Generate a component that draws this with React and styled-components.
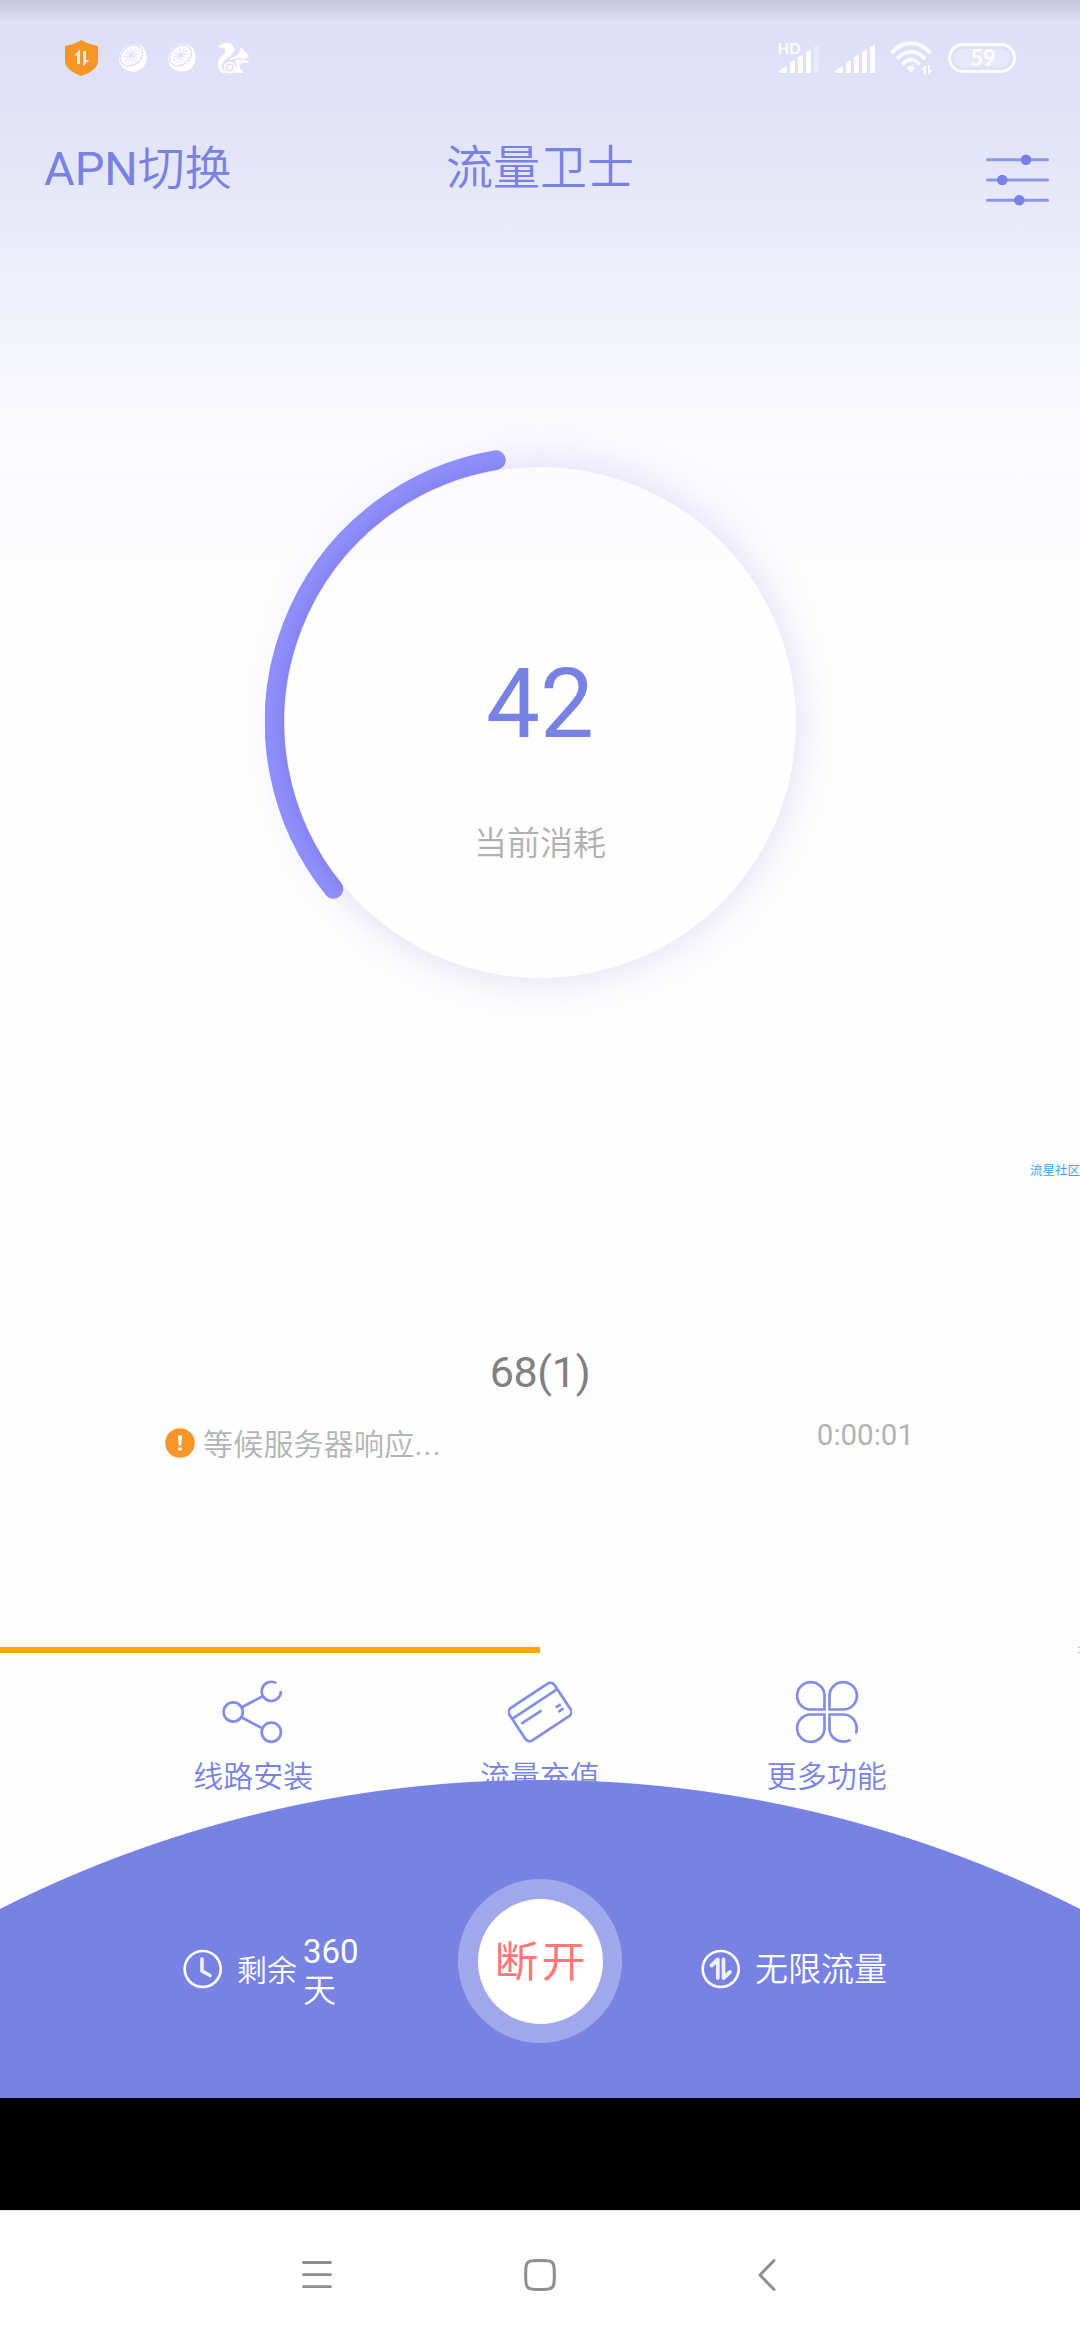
import styled, { createGlobalStyle } from "styled-components";

const App = () => {
  return (
    <Screen>
      <GlobalStyle />
      <StatusBar>
        <StatusIcons>
          <ShieldIcon />
          <LemonIcon />
          <LemonIcon />
          <SquirrelIcon />
        </StatusIcons>
        <SystemIcons>
          <SignalHdIcon />
          <SignalIcon />
          <WifiIcon />
          <Battery>
            <BatteryLevel>59</BatteryLevel>
          </Battery>
        </SystemIcons>
      </StatusBar>

      <Header>
        <ApnLink>
          APN<Thin>切换</Thin>
        </ApnLink>
        <Title>流量卫士</Title>
        <SettingsButton>
          <SlidersIcon />
        </SettingsButton>
      </Header>

      <Gauge>
        <GaugeDisk>
          <GaugeValue>42</GaugeValue>
          <GaugeLabel>当前消耗</GaugeLabel>
        </GaugeDisk>
        <GaugeArc />
      </Gauge>

      <Community>流星社区</Community>

      <Connection>
        <LineName>68(1)</LineName>
        <ConnectionRow>
          <AlertIcon />
          <ConnectionText>
            等候服务器响应<Dots>...</Dots>
          </ConnectionText>
          <Duration>0:00:01</Duration>
        </ConnectionRow>
      </Connection>

      <ProgressTrack>
        <ProgressBar />
        <ProgressEnd />
      </ProgressTrack>

      <Actions>
        {actions.map(({ label, Icon }) => (
          <Action key={label}>
            <Icon />
            <ActionLabel>{label}</ActionLabel>
          </Action>
        ))}
      </Actions>

      <Dome>
        <Remaining>
          <ClockIcon />
          <RemainingLabel>剩余</RemainingLabel>
          <RemainingDays>
            360<Thin>天</Thin>
          </RemainingDays>
        </Remaining>
        <DisconnectButton>
          <DisconnectInner>
            <DisconnectLabel>断开</DisconnectLabel>
          </DisconnectInner>
        </DisconnectButton>
        <Quota>
          <TrafficIcon />
          <QuotaLabel>无限流量</QuotaLabel>
        </Quota>
      </Dome>

      <BlackStrip />

      <NavBar>
        <MenuIcon />
        <HomeIcon />
        <BackIcon />
      </NavBar>
    </Screen>
  );
};

export default App;

/* Icons */

const ShieldIcon = () => (
  <svg width="33" height="36" viewBox="0 0 33 36">
    <path
      d="M16.5 0C21 3 27 5 33 6V21C33 28 25 33 16.5 36C8 33 0 28 0 21V6C6 5 12 3 16.5 0Z"
      fill="#f79628"
    />
    <path d="M15 9.500V24H12V15.500H9ZM18 11H21V20H24.500L18 26Z" fill="#e6e4f2" />
  </svg>
);

const LemonIcon = () => (
  <svg width="28" height="28" viewBox="0 0 28 28">
    <path
      d="M4 5C10 -1 19 -1 24 3C28 8 29 17 25 22C20 29 10 29 4 24C-1 20 -1 11 4 5Z"
      fill="#fff"
    />
    <g transform="rotate(-38 12.500 11.500)" stroke="#dfe0f8" fill="none">
      <ellipse cx="12.500" cy="11.500" rx="12" ry="9.300" strokeWidth="1.400" />
      <path
        d="M3 11.500H22M12.500 4.500V18.500M5 8L20 15M20 8L5 15M8.500 5L16.500 18M16.500 5L8.500 18"
        strokeWidth="0.900"
      />
    </g>
  </svg>
);

const SquirrelIcon = () => (
  <svg width="32" height="32" viewBox="0 0 32 32" fill="#fff">
    <path d="M1 5.500C4 0 13-1 16.500 4C19 8.500 16 12 12.500 14.500C8 18 5 20 5 25C5 28 7 30.500 10 31H6C2 29 0 25 1 20C2 14 9 13 8.500 8.500C8 5.500 4.500 4.500 1 5.500Z" />
    <path d="M13 16C17 15 20 14 22 11L24 5L27 9C29 10 31 12 31.500 14.500C30 17 27 17 25 16.500C21 15.500 17 16 13 18.500Z" />
    <path d="M17 18.500C21 17 26 17.500 31.500 18.500V21H25C23 22 22 24 23 27L26 29V31H16C20 29 21.500 23 17 18.500Z" />
    <circle cx="12.700" cy="25.500" r="5.100" fill="none" stroke="#fff" strokeWidth="2" />
    <circle cx="12.700" cy="25.500" r="2.400" />
  </svg>
);

const SignalHdIcon = () => (
  <SignalSvg width="42" height="32" viewBox="0 0 42 32" fill="#fcfcff">
    <HdText x="-0.5" y="12">
      HD
    </HdText>
    <path d="M1 28.500L9 24V31H1ZM12 20.500L17 18V31H12ZM20 15L25 13V31H20ZM28 10L33 7.500V31H28Z" />
    <path d="M36 5L41 2.500V31H36Z" opacity="0.350" />
  </SignalSvg>
);

const SignalIcon = () => (
  <svg width="40" height="32" viewBox="0 0 40 32" fill="#fcfcff">
    <path d="M0 28.500L8 24V31H0ZM11 20.500L16 18V31H11ZM19 15L24 13V31H19ZM27 10L32 7.500V31H27ZM35 5L40 2V31H35Z" />
  </svg>
);

const WifiIcon = () => (
  <svg width="43" height="34" viewBox="0 0 43 34">
    <g fill="none" stroke="#fcfcff" strokeWidth="3.800">
      <path d="M1.500 12C13-1 29-1 40.500 12" />
      <path d="M7 18C15 8.500 27 8.500 35 18" />
      <path d="M12.500 23.500C18 17 24 17 29.500 23.500" />
    </g>
    <path d="M16.500 27C19 24 23 24 25.500 27L21 31.500Z" fill="#fcfcff" />
    <path
      d="M36 24V33.500H33.800V28.500H31ZM38 33.500V24H40V29H42.500Z"
      fill="#fcfcff"
    />
  </svg>
);

const SlidersIcon = () => (
  <svg width="63" height="52" viewBox="0 0 63 52">
    <path
      d="M1.500 5.700H61.500M1.500 26H61.500M1.500 46.200H61.500"
      stroke="#8c96ea"
      strokeWidth="3"
      strokeLinecap="round"
    />
    <g fill="#7782e2">
      <circle cx="40" cy="5.700" r="5.300" />
      <circle cx="16.300" cy="26" r="5.300" />
      <circle cx="33.300" cy="46.200" r="5.300" />
    </g>
  </svg>
);

const GaugeArc = () => (
  <ArcSvg width="550" height="550" viewBox="0 0 550 550">
    <defs>
      <radialGradient id="arc" gradientUnits="userSpaceOnUse" cx="275" cy="275" r="275.500">
        <stop offset="0.925" stopColor="#8583f3" />
        <stop offset="0.980" stopColor="#8f8ffc" />
      </radialGradient>
    </defs>
    <path
      d="M68.500 442A265.600 265.600 0 0 1 231 13.100"
      fill="none"
      stroke="url(#arc)"
      strokeWidth="19.500"
      strokeLinecap="round"
    />
  </ArcSvg>
);

const AlertIcon = () => (
  <svg width="30" height="30" viewBox="0 0 30 30">
    <circle cx="15" cy="15" r="14.800" fill="#f79628" />
    <path d="M13 7.500H17L16.300 17.500H13.700ZM13.300 19.500H16.700V22.500H13.300Z" fill="#fff" />
  </svg>
);

const ShareIcon = () => (
  <svg width="64" height="64" viewBox="0 0 64 64" fill="none" stroke="#828de7" strokeWidth="2.700">
    <circle cx="12.200" cy="32" r="9.600" />
    <circle cx="50.300" cy="52.200" r="9.600" />
    <path d="M55.300 3.200A9.600 9.600 0 1 0 59.900 11" />
    <path d="M20.800 27.200L41.200 16.500M20.800 37.500L41.700 48.500" />
  </svg>
);

const CardIcon = () => (
  <svg width="64" height="64" viewBox="0 0 64 64" fill="none" stroke="#828de7" strokeWidth="2.700">
    <g transform="rotate(-33.500 32 32)">
      <rect x="5" y="12.500" width="54" height="39" rx="5" />
      <path d="M5 22.500H59" />
      <path d="M11 31.500H33" strokeLinecap="round" />
      <path d="M47.500 37H53.500M47.500 42H53.500" />
    </g>
  </svg>
);

const CloverIcon = () => (
  <svg width="64" height="64" viewBox="0 0 64 64" fill="none" stroke="#828de7" strokeWidth="2.700">
    <path d="M29.500 29.500H15.500A13.700 13.700 0 1 1 29.500 15.500Z" />
    <path d="M34.500 29.500V15.500A13.700 13.700 0 1 1 48.500 29.500Z" />
    <path d="M29.500 34.500V48.500A13.700 13.700 0 1 1 15.500 34.500Z" />
    <path d="M61 53.500C64 43 57 34.500 48.500 34.500H34.500V48.500C34.500 57.500 44 65 55.500 60" />
  </svg>
);

const ClockIcon = () => (
  <svg width="40" height="40" viewBox="0 0 40 40" fill="none" stroke="#fff">
    <circle cx="19.700" cy="20" r="18" strokeWidth="2.600" />
    <path
      d="M19 10V22L27 26.500"
      strokeWidth="3.600"
      strokeLinecap="round"
      strokeLinejoin="round"
      opacity="0.880"
    />
  </svg>
);

const TrafficIcon = () => (
  <svg width="40" height="40" viewBox="0 0 40 40" fill="none" stroke="#fff">
    <circle cx="19.700" cy="20" r="18" strokeWidth="2.600" />
    <path
      d="M10.500 16.500L16.800 10.500V29M22.500 10.500V29L29 23"
      strokeWidth="3.800"
      strokeLinecap="round"
      strokeLinejoin="round"
      opacity="0.880"
    />
  </svg>
);

const MenuIcon = () => (
  <svg width="30" height="32" viewBox="0 0 30 32">
    <path
      d="M1.500 3.500H28.500M1.500 15.700H28.500M1.500 27.700H28.500"
      stroke="#8f8f8f"
      strokeWidth="2.800"
      strokeLinecap="round"
    />
  </svg>
);

const HomeIcon = () => (
  <svg width="32" height="32" viewBox="0 0 32 32">
    <path
      d="M9 1.800Q16 1.200 23 1.800Q29.500 2 30 8Q30.700 16 30 24Q29.500 30 23 30.200Q16 30.800 9 30.200Q2.500 30 2 24Q1.300 16 2 8Q2.500 2 9 1.800Z"
      fill="none"
      stroke="#8f8f8f"
      strokeWidth="3"
    />
  </svg>
);

const BackIcon = () => (
  <svg width="20" height="32" viewBox="0 0 20 32">
    <path
      d="M16 1.500L2 16L16 30.500"
      fill="none"
      stroke="#8f8f8f"
      strokeWidth="3"
      strokeLinecap="round"
      strokeLinejoin="round"
    />
  </svg>
);

const actions = [
  { label: "线路安装", Icon: ShareIcon },
  { label: "流量充值", Icon: CardIcon },
  { label: "更多功能", Icon: CloverIcon },
];

/* Styles */

const GlobalStyle = createGlobalStyle`
  * {
    box-sizing: border-box;
  }
  body {
    margin: 0;
    background: #fefefe;
    font-family: Roboto, "Noto Sans CJK SC", sans-serif;
  }
  svg {
    display: block;
    flex: none;
  }
`;

const Screen = styled.div`
  display: flex;
  flex-direction: column;
  width: 1080px;
  height: 2340px;
  overflow: hidden;
  background:
    linear-gradient(rgba(90, 90, 110, 0.18), rgba(90, 90, 110, 0) 22px),
    linear-gradient(
      #dedff8 0,
      #e1e2f7 110px,
      #e9ebf9 230px,
      #f4f4fc 340px,
      #fafaff 440px,
      #fefefe 620px
    );
`;

/* Chinese glyphs next to Roboto, a step lighter than regular */
const Thin = styled.span`
  font-weight: 350;
`;

const StatusBar = styled.div`
  display: flex;
  justify-content: space-between;
  align-items: center;
  height: 116px;
  padding: 0 64px 0 65px;
`;

const StatusIcons = styled.div`
  display: flex;
  align-items: center;
  gap: 21px;
`;

const SystemIcons = styled.div`
  display: flex;
  align-items: center;
  gap: 15px;
`;

const SignalSvg = styled.svg`
  overflow: visible;
`;

const HdText = styled.text`
  font: 700 15px Lato, sans-serif;
  letter-spacing: 0.3px;
`;

const Battery = styled.div`
  width: 68px;
  height: 30px;
  padding: 3px;
  border: 3px solid #fcfcff;
  border-radius: 15px;
`;

const BatteryLevel = styled.div`
  height: 18px;
  width: 56px;
  padding-left: 2px;
  border-radius: 9px;
  background: rgba(255, 255, 255, 0.25);
  color: #fcfcff;
  font: 900 22px/18px Lato, sans-serif;
  text-align: center;
`;

const Header = styled.div`
  display: grid;
  grid-template-columns: 1fr auto 1fr;
  height: 104px;
  color: #7782e2;
  font-size: 47px;
  line-height: 104px;
`;

const ApnLink = styled.div`
  padding: 1px 0 0 44px;
`;

const Title = styled.div`
  font-weight: 350;
`;

const SettingsButton = styled.div`
  justify-self: end;
  padding: 38px 31px 0 0;
`;

const Gauge = styled.div`
  position: relative;
  width: 550px;
  height: 550px;
  margin: 227px auto 0;
  padding: 19.5px;
`;

const GaugeDisk = styled.div`
  width: 511px;
  height: 511px;
  padding-top: 181px;
  border-radius: 50%;
  box-shadow: 0 0 46px rgba(120, 100, 210, 0.23);
  text-align: center;
`;

/* lies over the rim of the disk */
const ArcSvg = styled.svg`
  position: absolute;
  top: 0;
  left: 0;
`;

const GaugeValue = styled.div`
  color: #7782e2;
  font-size: 96px;
  line-height: 112px;
`;

const GaugeLabel = styled.div`
  margin-top: 64px;
  color: #b0b0b0;
  font-size: 33px;
  font-weight: 350;
  line-height: 40px;
`;

const Community = styled.div`
  margin-top: 162px;
  color: #3ba3f8;
  font-size: 12.5px;
  line-height: 24px;
  text-align: right;
`;

const Connection = styled.div`
  height: 464px;
  padding: 163px 165px 0;
`;

const LineName = styled.div`
  color: #808080;
  font-size: 43px;
  letter-spacing: -0.3px;
  line-height: 52px;
  text-align: center;
`;

const ConnectionRow = styled.div`
  display: flex;
  align-items: flex-start;
  padding-top: 30px;
  color: #b0b5b3;
  font-size: 30px;
  line-height: 36px;
`;

const ConnectionText = styled.div`
  margin: -1px 0 0 8px;
  font-weight: 350;
  letter-spacing: 0.2px;
`;

const Dots = styled.span`
  font-weight: 400;
  letter-spacing: 1.3px;
`;

const Duration = styled.div`
  margin: -11px 1px 0 auto;
  font-size: 29.5px;
`;

const ProgressTrack = styled.div`
  display: flex;
  justify-content: space-between;
  height: 6px;
`;

const ProgressBar = styled.div`
  width: 50%;
  background: #fea50f;
`;

const ProgressEnd = styled.div`
  width: 2px;
  border: solid #f9b95a;
  border-width: 1px 0;
`;

const Actions = styled.div`
  display: grid;
  grid-template-columns: repeat(3, 1fr);
  height: 127px;
  padding: 27px 110px 0;
`;

const Action = styled.div`
  display: flex;
  flex-direction: column;
  align-items: center;
`;

const ActionLabel = styled.div`
  margin-top: 14px;
  color: #7782e2;
  font-size: 30px;
  font-weight: 350;
  line-height: 38px;
  white-space: nowrap;
`;

/* z-index keeps the arc above the action labels */
const Dome = styled.div`
  position: relative;
  z-index: 1;
  display: flex;
  height: 318px;
  background: radial-gradient(circle at 540px 1195px, #7782e2 1194.5px, transparent 1195.5px);
  color: #fff;
`;

const Remaining = styled.div`
  display: flex;
  align-items: flex-start;
  width: 458px;
  padding: 169px 0 0 183px;
`;

const RemainingLabel = styled.div`
  margin: 2px 0 0 14px;
  font-size: 30px;
  font-weight: 350;
  line-height: 40px;
  white-space: nowrap;
`;

const RemainingDays = styled.div`
  width: 60px;
  margin: -17px 0 0 6px;
  font-size: 33px;
  line-height: 39px;
`;

const DisconnectButton = styled.div`
  display: flex;
  justify-content: center;
  align-items: center;
  width: 164px;
  height: 164px;
  margin-top: 99px;
  border-radius: 50%;
  background: #a0a8eb;
`;

const DisconnectInner = styled.div`
  display: flex;
  justify-content: center;
  align-items: center;
  width: 125px;
  height: 125px;
  border-radius: 50%;
  background: #fff;
`;

const DisconnectLabel = styled.span`
  padding: 3px 0 0 3px;
  color: #ff7777;
  font-size: 44px;
  letter-spacing: 3px;
  line-height: 50px;
  white-space: nowrap;
  transform: scaleY(0.95);
`;

const Quota = styled.div`
  display: flex;
  align-items: flex-start;
  padding: 169px 0 0 79px;
`;

const QuotaLabel = styled.div`
  margin: 1px 0 0 14px;
  font-size: 33px;
  font-weight: 350;
  line-height: 40px;
`;

const BlackStrip = styled.div`
  height: 112px;
  background: #000;
`;

const NavBar = styled.div`
  display: grid;
  grid-template-columns: 1fr auto 1fr;
  align-items: start;
  flex: 1;
  padding: 48px 302px 0;
  border-top: 1px solid #e4e4e4;
  background: #fff;

  & > :last-child {
    justify-self: end;
  }
`;
